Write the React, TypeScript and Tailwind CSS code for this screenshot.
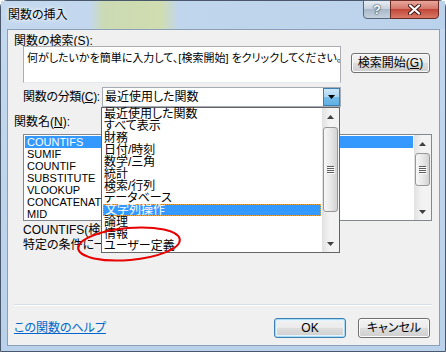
import React from 'react';

const categories = [
  '最近使用した関数',
  'すべて表示',
  '財務',
  '日付/時刻',
  '数学/三角',
  '統計',
  '検索/行列',
  'データベース',
  '文字列操作',
  '論理',
  '情報',
  'ユーザー定義',
];

const functions = ['COUNTIFS', 'SUMIF', 'COUNTIF', 'SUBSTITUTE', 'VLOOKUP', 'CONCATENATE', 'MID'];

function Arrow({ down }: { down?: boolean }) {
  return (
    <svg width="7" height="4" viewBox="0 0 7 4">
      <path d={down ? 'M0 0H7L3.5 4Z' : 'M0 4H7L3.5 0Z'} fill="#404040" />
    </svg>
  );
}

function Grip() {
  return (
    <svg width="8" height="8" viewBox="0 0 8 8">
      <path d="M0 0.5H7M0 2.5H7M0 4.5H7M0 6.5H7" stroke="#5c5c5c" strokeWidth="1" />
      <path d="M1 1.5H8M1 3.5H8M1 5.5H8M1 7.5H8" stroke="#ffffff" strokeWidth="1" />
    </svg>
  );
}

function Scrollbar({ thumb }: { thumb: string }) {
  return (
    <div className="flex w-[17px] flex-col bg-[linear-gradient(90deg,#e1e1e1,#f3f3f3_45%,#f3f3f3)]">
      <div className="flex h-[17px] items-center justify-center">
        <Arrow />
      </div>
      <div className="flex-1 px-px">
        <div
          className={
            'flex items-center justify-center rounded-[3px] border border-[#979797] bg-[linear-gradient(90deg,#f7f7f7,#e8e8e8_50%,#d3d3d3)] ' +
            thumb
          }
        >
          <Grip />
        </div>
      </div>
      <div className="flex h-[17px] items-center justify-center">
        <Arrow down />
      </div>
    </div>
  );
}

function Button({ children, isDefault, className }: { children: React.ReactNode; isDefault?: boolean; className?: string }) {
  return (
    <div
      className={
        'flex h-[20px] items-center justify-center rounded-[3px] border whitespace-nowrap bg-[linear-gradient(#f2f2f2,#ebebeb_50%,#dddddd_50%,#cfcfcf)] ' +
        (isDefault
          ? 'border-[#3c7fb1] shadow-[inset_0_0_0_1px_#a6dbf3,inset_0_0_0_2px_#e4f4fc] '
          : 'border-[#707070] shadow-[inset_0_0_0_1px_#fcfcfc] ') +
        (className ?? '')
      }
    >
      {children}
    </div>
  );
}

export default function App() {
  return (
    <div className="h-[352px] w-[446px] overflow-hidden bg-white font-['Liberation_Sans','Noto_Sans_CJK_JP',sans-serif] text-[12px] leading-[12px] text-black [font-feature-settings:'palt']">
      <div className="h-[352px] w-[446px] rounded-t-[7px] border border-[#49586a] bg-[linear-gradient(#c4d9ef,#b9d1ea)]">
        {/* Title bar */}
        <div className="flex h-[28px] bg-[linear-gradient(90deg,#c3d8ee_0%,#c3d8ee_20%,#ccdab4_23%,#d0ddb0_36%,#c0d6ec_40%,#bad2eb_100%)]">
          <span className="ml-[7px] mt-[8px] [text-shadow:0_0_6px_#ffffff,0_0_3px_#ffffff]">関数の挿入</span>
          <div className="-mt-px ml-auto mr-[6px] flex h-[19px]">
            <div className="flex w-[28px] items-center justify-center rounded-bl-[4px] border border-[#56677a] bg-[linear-gradient(#e6ecf3,#c8d3df_45%,#a9b8c9_50%,#c4d1de)] text-[13px] font-bold text-white [text-shadow:0_0_1px_#1e2a38,0_0_2px_#1e2a38]">
              ?
            </div>
            <div className="-ml-px flex w-[49px] items-center justify-center rounded-br-[4px] border border-[#6a2b24] bg-[linear-gradient(#e8a89c,#d4786a_45%,#c2473a_50%,#d87a66)]">
              <svg width="13" height="11" viewBox="0 0 13 11">
                <path d="M2 1.5L11 9.5M11 1.5L2 9.5" stroke="#3a1410" strokeWidth="4" strokeLinecap="round" />
                <path d="M2 1.5L11 9.5M11 1.5L2 9.5" stroke="#ffffff" strokeWidth="2.2" strokeLinecap="round" />
              </svg>
            </div>
          </div>
        </div>

        {/* Client area */}
        <div className="relative ml-[6px] flex h-[317px] w-[433px] flex-col border border-[#8b9fb6] bg-[#f0f0f0]">
          <div className="ml-[6px] mt-[5px] h-[11px] whitespace-nowrap">
            関数の検索(<span className="underline">S</span>):
          </div>

          <div className="flex items-start">
            <div className="ml-[15px] h-[37px] w-[318px] overflow-hidden border border-[#abadb3] border-b-[#e3e9ef] bg-white pl-[3px] pt-[5px] text-[11px] whitespace-nowrap">
              何がしたいかを簡単に入力して、[検索開始] をクリックしてください。
            </div>
            <Button className="ml-[10px] mt-[7px] w-[79px]">
              検索開始(<span className="underline">G</span>)
            </Button>
          </div>

          <div className="mt-[4px] flex items-center pl-[15px]">
            <span className="w-[79px] whitespace-nowrap tracking-[-0.3px]">
              関数の分類(<span className="underline">C</span>):
            </span>
            <div className="flex h-[20px] w-[239px] border border-[#a5acb5] bg-white">
              <span className="flex flex-1 items-center pl-[2px]">最近使用した関数</span>
              <div className="flex w-[17px] items-center justify-center border border-[#3c7fb1] bg-[linear-gradient(#cbe7f7,#a9d6f1_50%,#76bde8_50%,#5fb1e4)]">
                <svg width="7" height="4" viewBox="0 0 7 4">
                  <path d="M0 0H7L3.5 4Z" fill="#000000" />
                </svg>
              </div>
            </div>
          </div>

          <div className="ml-[6px] mt-[9px] whitespace-nowrap">
            関数名(<span className="underline">N</span>):
          </div>

          <div className="ml-[15px] mt-[6px] flex h-[87px] w-[409px] border border-[#828790] bg-white">
            <div className="flex-1 px-px pt-px text-[11px]">
              {functions.map((f, i) => (
                <div key={f} className={'h-[12px] pl-[2px] ' + (i === 0 ? 'bg-[#3399ff] text-white' : '')}>
                  {f}
                </div>
              ))}
            </div>
            <Scrollbar thumb="mt-px h-[33px]" />
          </div>

          <div className="ml-[15px] mt-[2px] whitespace-nowrap leading-[15px]">
            <div>COUNTIFS(検索条件範囲1,検索条件1,...)</div>
            <div>特定の条件に一致する複数のセルの個数を返します。</div>
          </div>

          <div className="ml-[6px] mr-[7px] mt-auto h-[2px] border-t border-b border-t-[#d5dfe5] border-b-white" />

          <div className="mb-[7px] mt-[12px] flex items-center">
            <span className="ml-[6px] text-[#0066cc] underline">この関数のヘルプ</span>
            <Button isDefault className="ml-auto w-[72px]">
              OK
            </Button>
            <Button className="ml-[12px] mr-[9px] w-[72px]">キャンセル</Button>
          </div>

          {/* Open category dropdown */}
          <div className="absolute left-[93px] top-[77px] flex h-[146px] w-[239px] border border-[#646464] bg-white">
            <div className="flex-1 pl-px pr-px">
              {categories.map((c, i) => (
                <div
                  key={c}
                  className={
                    'h-[12px] whitespace-nowrap pl-[1px] ' +
                    (i === 8 ? 'border border-dotted border-[#e8a24a] bg-[#3399ff] pl-0 leading-[10px] text-white' : '')
                  }
                >
                  {c}
                </div>
              ))}
            </div>
            <Scrollbar thumb="mt-[2px] h-[85px]" />
          </div>

          {/* Red annotation circle */}
          <svg className="absolute left-[66px] top-[195px]" width="112" height="40" viewBox="0 0 112 40">
            <ellipse cx="55" cy="19" rx="51" ry="16" fill="none" stroke="#e80000" strokeWidth="2" transform="rotate(-5 55 19)" />
          </svg>
        </div>
      </div>
    </div>
  );
}
